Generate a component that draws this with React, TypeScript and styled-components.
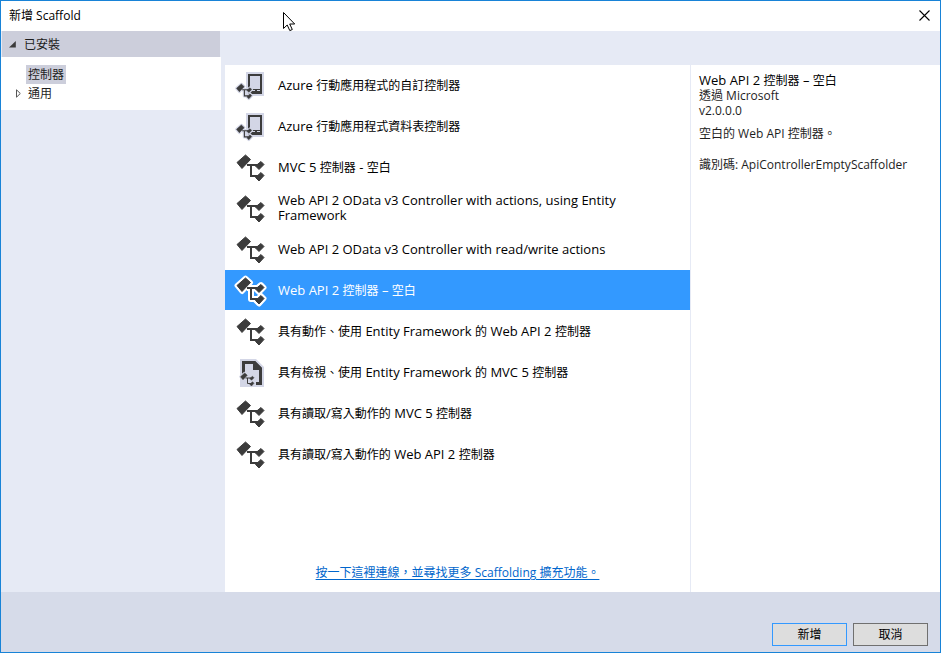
import React, { useState } from "react";
import styled, { createGlobalStyle } from "styled-components";

const GlobalStyle = createGlobalStyle`
  * { box-sizing: border-box; }
  body {
    margin: 0;
    font-family: "Open Sans", "Noto Sans CJK TC", sans-serif;
    font-size: 12px;
    line-height: 15px;
    color: #1e1e1e;
  }
  button { font: inherit; color: inherit; }
`;

const Dialog = styled.main`
  display: flex;
  flex-direction: column;
  min-height: 100vh;
  border: 1px solid #1883d7;
  background: #e6eaf5;
`;

const TitleBar = styled.header`
  display: flex;
  align-items: center;
  justify-content: space-between;
  height: 30px;
  padding: 0 8px 2px;
  background: #fff;
`;

const Title = styled.h1`
  margin: 0;
  font-size: 12px;
  font-weight: 400;
  color: #000;
`;

const CloseButton = styled.button`
  display: flex;
  padding: 2px;
  border: 0;
  background: none;
`;

const Body = styled.div`
  display: grid;
  grid-template-columns: 220px minmax(0, 1fr);
  flex: 1;
`;

const Sidebar = styled.nav`
  width: 220px;
`;

const GroupButton = styled.button`
  display: flex;
  align-items: center;
  gap: 8px;
  width: 219px;
  height: 26px;
  padding: 0 7px;
  border: 0;
  border-left: 1px solid #e6eaf5;
  background: #cccedb;
  text-align: left;
`;

const Tree = styled.ul`
  margin: 0;
  padding: 8px 0 7px 14px;
  background: #fff;
  list-style: none;
`;

const TreeItem = styled.li`
  display: grid;
  grid-template-columns: 10px auto;
  justify-content: start;
  align-items: center;
`;

const TreeButton = styled.button<{ $selected?: boolean }>`
  grid-column: 2;
  height: 19px;
  padding: 0 2px;
  margin-left: 1px;
  border: 0;
  background: ${(p) => (p.$selected ? "#cccedb" : "transparent")};
`;

const Columns = styled.div`
  display: grid;
  grid-template-columns: minmax(0, 465fr) minmax(0, 250fr);
  margin: 34px 0 0 4px;
  background: #fff;
`;

const ListPane = styled.section`
  display: flex;
  flex-direction: column;
  justify-content: space-between;
  padding-bottom: 12px;
`;

const List = styled.ul`
  margin: 0;
  padding: 0;
  list-style: none;
`;

const Row = styled.button<{ $selected: boolean }>`
  display: flex;
  align-items: center;
  gap: 11px;
  width: 100%;
  min-height: 40px;
  margin-bottom: 1px;
  padding: 0 60px 0 9px;
  border: 0;
  text-align: left;
  color: ${(p) => (p.$selected ? "#fff" : "#000")};
  background: ${(p) => (p.$selected ? "#3399ff" : "transparent")};
  svg { flex: none; }
`;

const Latin = styled.span`
  font-size: 13px;
`;

const MoreLink = styled.a`
  align-self: center;
  color: #0066cc;
  text-decoration: underline;
  text-underline-offset: 2px;
`;

const Details = styled.aside`
  padding: 8px;
  border-left: 1px solid #e6eaf5;
`;

const DetailTitle = styled.h2`
  margin: 0;
  font-size: 12px;
  font-weight: 400;
  color: #000;
`;

const Line = styled.p<{ $gap?: number }>`
  margin: ${(p) => p.$gap ?? 0}px 0 0;
`;

const Footer = styled.footer`
  display: flex;
  justify-content: flex-end;
  align-items: flex-end;
  gap: 6px;
  height: 60px;
  padding: 0 12px 6px;
  background: #d6dbe9;
`;

const ActionButton = styled.button<{ $primary?: boolean }>`
  width: 75px;
  height: 23px;
  padding: 0;
  border: 1px solid ${(p) => (p.$primary ? "#3399ff" : "#707070")};
  background: #ddd;
  color: #000;
`;

const Pointer = styled.svg`
  position: absolute;
  left: 282px;
  top: 11px;
  pointer-events: none;
`;

const NODES =
  "M1 9.5 9.5 2 14.5 6.5 6 15.5Z M19.5 13 25 8.5 28 11.5 23 16.5Z M19.5 24.5 25 19.5 28 22.5 23 28Z";
const WIRES = "M11 12H22 M15 12V23H22";

const Controller = ({ outline }: { outline?: string }) => (
  <>
    {outline && (
      <g stroke={outline} strokeWidth="5" strokeLinejoin="round" fill={outline}>
        <path d={NODES} />
        <path d={WIRES} fill="none" strokeWidth="6" />
      </g>
    )}
    <path d={NODES} fill="#3c3c3c" stroke="#3c3c3c" strokeWidth="1" strokeLinejoin="round" />
    <path d={WIRES} fill="none" stroke="#3c3c3c" strokeWidth="2" />
  </>
);

const ControllerIcon = ({ selected }: { selected: boolean }) => (
  <svg width="33" height="33" viewBox="-2 -2 33 33" aria-hidden="true">
    <Controller outline={selected ? "#fff" : undefined} />
  </svg>
);

const DeviceIcon = () => (
  <svg width="33" height="33" viewBox="0 0 33 33" aria-hidden="true">
    <path d="M12 3h18v24H12z" fill="#d3d6e6" />
    <path d="M15 6h12v18H15z" fill="#d3d6e6" stroke="#3c3c3c" strokeWidth="2" />
    <path d="M16 20h10v4H16z" fill="#3c3c3c" />
    <path d="M18 21h3v1h-3z M23 21h3v1h-3z" fill="#d3d6e6" />
    <g transform="translate(2 14) scale(.56)">
      <Controller outline="#d3d6e6" />
    </g>
  </svg>
);

const PageIcon = () => (
  <svg width="33" height="33" viewBox="0 0 33 33" aria-hidden="true">
    <path d="M6 3h16l8 8v20H6z" fill="#d3d6e6" />
    <path d="M9.5 18V6.5h11l6 6v15H22" fill="none" stroke="#3c3c3c" strokeWidth="3" />
    <path d="M19 5h2l7 7v2h-9z" fill="#3c3c3c" />
    <g transform="translate(6 16) scale(.5)">
      <Controller outline="#d3d6e6" />
    </g>
  </svg>
);

type Kind = "device" | "controller" | "page";

const items: { kind: Kind; label: string }[] = [
  { kind: "device", label: "Azure 行動應用程式的自訂控制器" },
  { kind: "device", label: "Azure 行動應用程式資料表控制器" },
  { kind: "controller", label: "MVC 5 控制器 - 空白" },
  { kind: "controller", label: "Web API 2 OData v3 Controller with actions, using Entity Framework" },
  { kind: "controller", label: "Web API 2 OData v3 Controller with read/write actions" },
  { kind: "controller", label: "Web API 2 控制器 – 空白" },
  { kind: "controller", label: "具有動作、使用 Entity Framework 的 Web API 2 控制器" },
  { kind: "page", label: "具有檢視、使用 Entity Framework 的 MVC 5 控制器" },
  { kind: "controller", label: "具有讀取/寫入動作的 MVC 5 控制器" },
  { kind: "controller", label: "具有讀取/寫入動作的 Web API 2 控制器" },
];

// Latin runs are set one size up so they balance the full-width characters.
const MixedText = ({ text }: { text: string }) => (
  <span>
    {text
      .split(/([\u0020-\u2fff]+)/)
      .filter(Boolean)
      .map((run, i) => (run.charCodeAt(0) < 0x3000 ? <Latin key={i}>{run}</Latin> : run))}
  </span>
);

const RowIcon = ({ kind, selected }: { kind: Kind; selected: boolean }) => {
  if (kind === "device") return <DeviceIcon />;
  if (kind === "page") return <PageIcon />;
  return <ControllerIcon selected={selected} />;
};

export default function App() {
  const [selected, setSelected] = useState(5);
  return (
    <Dialog>
      <GlobalStyle />
      <TitleBar>
        <Title>新增 Scaffold</Title>
        <CloseButton aria-label="關閉">
          <svg width="11" height="11" viewBox="0 0 11 11" aria-hidden="true">
            <path d="M.5.5l10 10M10.5.5l-10 10" stroke="#000" strokeWidth="1.1" />
          </svg>
        </CloseButton>
      </TitleBar>
      <Body>
        <Sidebar>
          <GroupButton aria-expanded="true">
            <svg width="7" height="7" viewBox="0 0 7 7" aria-hidden="true">
              <path d="M6.8 0v6.5H0z" fill="#3c3c3c" />
            </svg>
            已安裝
          </GroupButton>
          <Tree>
            <TreeItem>
              <TreeButton $selected>控制器</TreeButton>
            </TreeItem>
            <TreeItem>
              <svg width="7" height="9" viewBox="0 0 7 9" aria-hidden="true">
                <path d="M1.5.8 5.3 4.5 1.5 8.2z" fill="#fff" stroke="#555" />
              </svg>
              <TreeButton>通用</TreeButton>
            </TreeItem>
          </Tree>
        </Sidebar>
        <Columns>
          <ListPane>
            <List>
              {items.map((item, i) => (
                <li key={item.label}>
                  <Row $selected={i === selected} aria-pressed={i === selected} onClick={() => setSelected(i)}>
                    <RowIcon kind={item.kind} selected={i === selected} />
                    <MixedText text={item.label} />
                  </Row>
                </li>
              ))}
            </List>
            <MoreLink href="#more">按一下這裡連線，並尋找更多 Scaffolding 擴充功能。</MoreLink>
          </ListPane>
          <Details>
            <DetailTitle>
              <MixedText text="Web API 2 控制器 – 空白" />
            </DetailTitle>
            <Line>透過 Microsoft</Line>
            <Line>v2.0.0.0</Line>
            <Line $gap={8}>空白的 Web API 控制器。</Line>
            <Line $gap={16}>識別碼: ApiControllerEmptyScaffolder</Line>
          </Details>
        </Columns>
      </Body>
      <Footer>
        <ActionButton $primary>新增</ActionButton>
        <ActionButton>取消</ActionButton>
      </Footer>
      <Pointer width="14" height="21" viewBox="0 0 14 21" aria-hidden="true">
        <path d="M1.5 1.5v16l3.7-3.5 2.6 5.6 2.5-1.1-2.6-5.5h5z" fill="#fff" stroke="#000" />
      </Pointer>
    </Dialog>
  );
}
